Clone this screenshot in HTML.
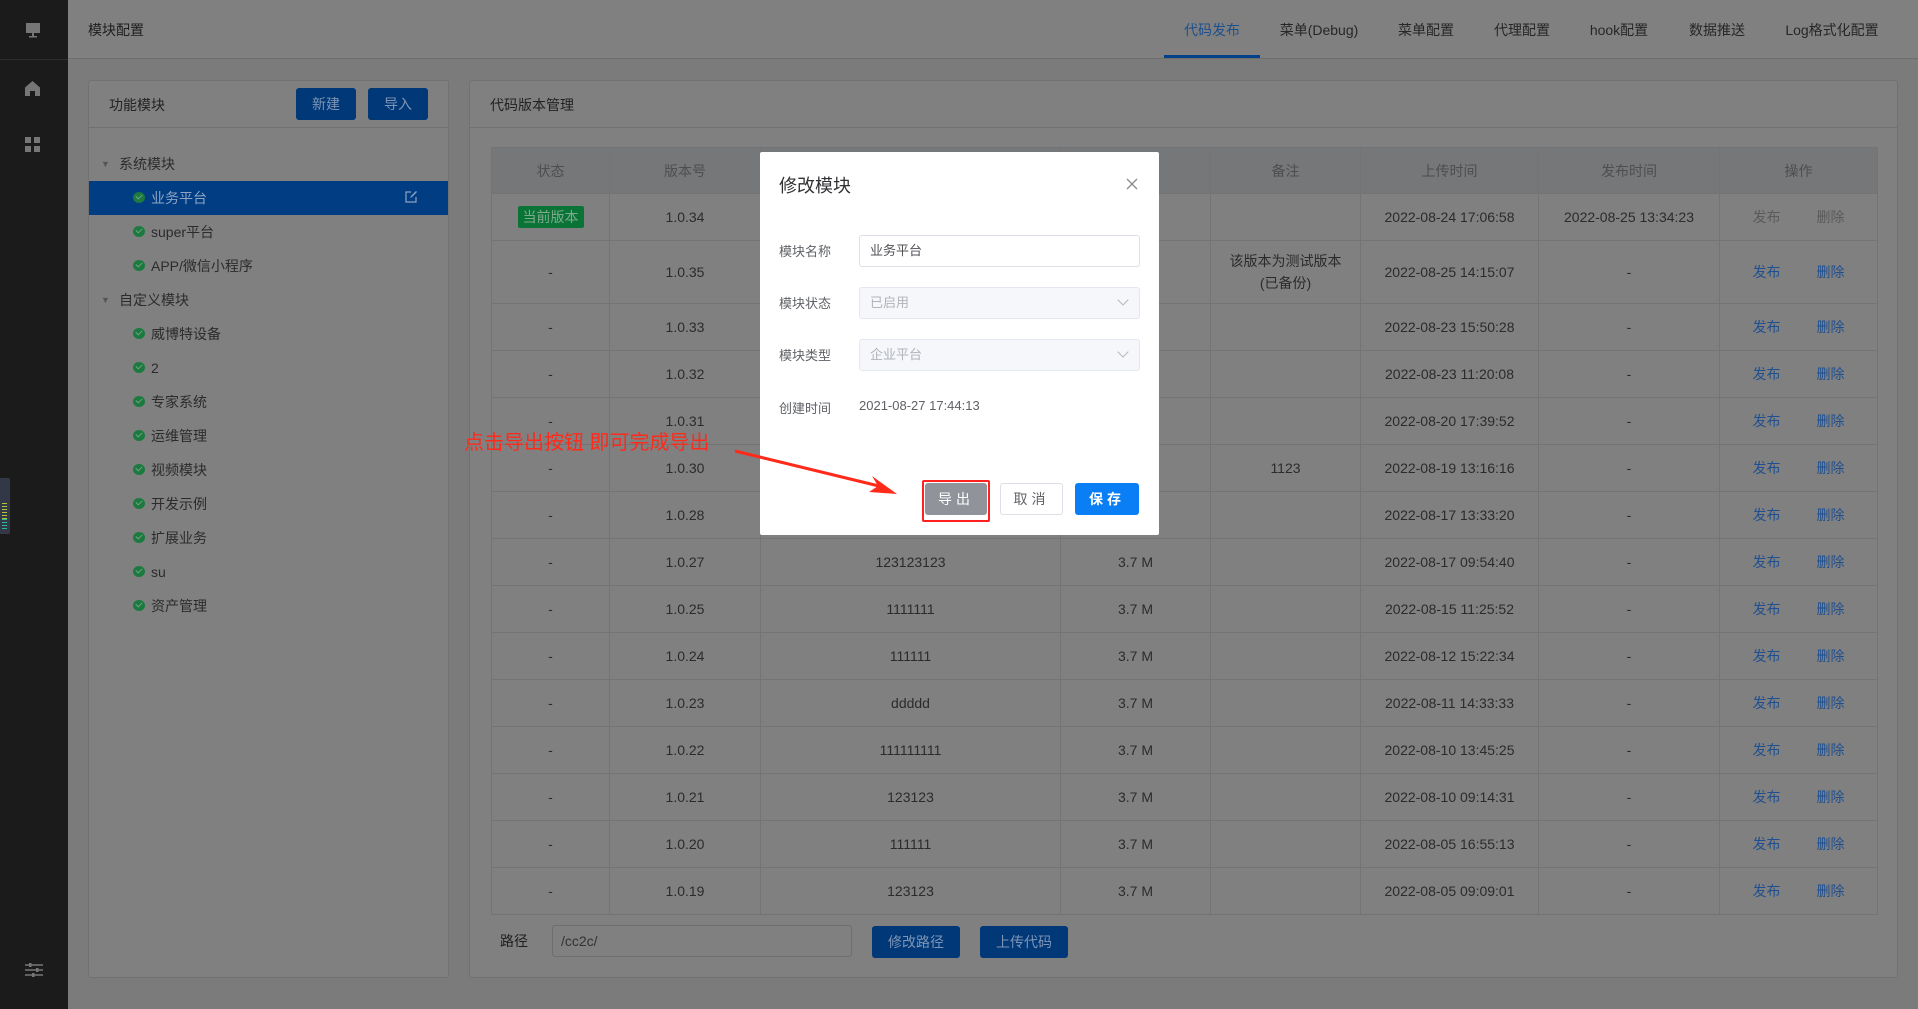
<!DOCTYPE html>
<html><head><meta charset="utf-8">
<style>
*{box-sizing:border-box;margin:0;padding:0}
body{width:1918px;height:1009px;overflow:hidden;background:#7b7b7c;font-family:"Liberation Sans","Noto Sans CJK SC",sans-serif;font-size:14px;color:#2b2b2b;position:relative}
.abs{position:absolute}
#side{left:0;top:0;width:68px;height:1009px;background:#1b1b1b}
#side .ln{position:absolute;left:0;top:59px;width:68px;height:1px;background:#2e2e2e}
#hdr{left:68px;top:0;width:1850px;height:59px;background:#808080;border-bottom:1px solid #6e6e6e}
.tab{position:absolute;top:20px;font-size:14px;color:#262626;transform:translateX(-50%);white-space:nowrap}
.panel{background:#808080;border:1px solid #717171;border-radius:3px}
.btn{position:absolute;background:#003878;color:#7f95b5;border-radius:3px;text-align:center;font-size:14px}
.tree{position:absolute;left:0;width:359px;height:34px;line-height:34px}
.chk{position:absolute;left:44px;top:11px;width:12px;height:11px;border-radius:50%;background:#1c7a3e}
.chk:after{content:"";position:absolute;left:3px;top:2px;width:5px;height:3px;border-left:1.5px solid #74a087;border-bottom:1.5px solid #74a087;transform:rotate(-45deg)}
table{border-collapse:collapse;position:absolute;left:491px;top:147px;width:1386px;table-layout:fixed}
td,th{border:1px solid #747474;text-align:center;font-weight:normal;font-size:14px;color:#2b2b2b}
th{background:#767778;color:#4e4e4e;height:46px}
td{height:47px}
a{color:#1f4f90;text-decoration:none;margin:0 18px}
.g{color:#5a5a5a}
#modal{left:760px;top:152px;width:399px;height:383px;background:#fff;border-radius:2px}
.lbl{position:absolute;left:19px;color:#5f6166;font-size:13px}
.inp{position:absolute;left:99px;width:281px;height:32px;border:1px solid #dcdfe6;border-radius:3px;padding-left:10px;line-height:30px;font-size:13px}
.dis{background:#f5f7fa;color:#b0b3b8;border-color:#e4e7ed}
.arr{position:absolute;right:12px;top:8px;width:8px;height:8px;border-right:1px solid #b4b6bb;border-bottom:1px solid #b4b6bb;transform:rotate(45deg)}
</style></head><body>
<div id="side" class="abs"><div class="ln"></div>
<svg class="abs" style="left:25px;top:22px" width="16" height="16" viewBox="0 0 16 16"><rect x="1" y="1" width="14" height="10" fill="#767676"/><rect x="7" y="11" width="2" height="3" fill="#767676"/><rect x="4" y="14" width="8" height="1.5" fill="#767676"/></svg>
<svg class="abs" style="left:25px;top:81px" width="15" height="15" viewBox="0 0 15 15"><path d="M7.5 0L0 6.5V15h5v-5h5v5h5V6.5z" fill="#767676"/></svg>
<svg class="abs" style="left:25px;top:137px" width="15" height="15" viewBox="0 0 15 15"><rect x="0" y="0" width="6" height="6" fill="#767676"/><rect x="9" y="0" width="6" height="6" fill="#767676"/><rect x="0" y="9" width="6" height="6" fill="#767676"/><rect x="9" y="9" width="6" height="6" fill="#767676"/></svg>
<svg class="abs" style="left:25px;top:963px" width="18" height="14" viewBox="0 0 18 14"><g stroke="#777" stroke-width="1.5"><line x1="0" y1="2" x2="18" y2="2"/><line x1="0" y1="7" x2="18" y2="7"/><line x1="0" y1="12" x2="18" y2="12"/></g><rect x="4" y="0" width="2.5" height="4" fill="#777"/><rect x="11" y="5" width="2.5" height="4" fill="#777"/><rect x="7" y="10" width="2.5" height="4" fill="#777"/></svg>
<div class="abs" style="left:0;top:478px;width:10px;height:56px;background:#333846;border-radius:0 2px 2px 0"></div>
<div class="abs" style="left:2px;top:503px;width:5px;height:16px;background:repeating-linear-gradient(#b5c23a 0 1px,transparent 1px 3px)"></div>
<div class="abs" style="left:2px;top:519px;width:5px;height:12px;background:repeating-linear-gradient(#2fb79a 0 1px,transparent 1px 3px)"></div>
</div>
<div id="hdr" class="abs">
<div class="abs" style="left:20px;top:20px;color:#1e1e1e">模块配置</div>
<div class="tab" style="left:1144px;color:#1d4f8c">代码发布</div>
<div class="tab" style="left:1251px">菜单(Debug)</div>
<div class="tab" style="left:1358px">菜单配置</div>
<div class="tab" style="left:1454px">代理配置</div>
<div class="tab" style="left:1551px">hook配置</div>
<div class="tab" style="left:1649px">数据推送</div>
<div class="tab" style="left:1764px">Log格式化配置</div>
<div class="abs" style="left:1096px;top:55px;width:96px;height:3px;background:#00418a"></div>
</div>

<div class="abs panel" style="left:88px;top:80px;width:361px;height:898px">
<div class="abs" style="left:0;top:46px;width:359px;height:1px;background:#717171"></div>
<div class="abs" style="left:20px;top:14px;color:#222">功能模块</div>
<div class="btn" style="left:207px;top:7px;width:60px;height:32px;line-height:32px">新建</div>
<div class="btn" style="left:279px;top:7px;width:60px;height:32px;line-height:32px">导入</div>
<div class="tree" style="top:66px"><span class="abs" style="left:12px;top:0;color:#555;font-size:9px">▼</span><span class="abs" style="left:30px">系统模块</span></div>
<div class="tree" style="top:100px;background:#003d82"><div class="chk"></div><span class="abs" style="left:62px;color:#8ea4c4">业务平台</span><svg class="abs" style="left:316px;top:10px" width="12" height="12" viewBox="0 0 12 12"><path d="M6 1H1v10h10V6" fill="none" stroke="#8ea4c4" stroke-width="1.2"/><path d="M5 7l1-2 5-5 1 1-5 5z" fill="#8ea4c4"/></svg></div>
<div class="tree" style="top:134px"><div class="chk"></div><span class="abs" style="left:62px">super平台</span></div>
<div class="tree" style="top:168px"><div class="chk"></div><span class="abs" style="left:62px">APP/微信小程序</span></div>
<div class="tree" style="top:202px"><span class="abs" style="left:12px;color:#555;font-size:9px">▼</span><span class="abs" style="left:30px">自定义模块</span></div>
<div class="tree" style="top:236px"><div class="chk"></div><span class="abs" style="left:62px">威博特设备</span></div>
<div class="tree" style="top:270px"><div class="chk"></div><span class="abs" style="left:62px">2</span></div>
<div class="tree" style="top:304px"><div class="chk"></div><span class="abs" style="left:62px">专家系统</span></div>
<div class="tree" style="top:338px"><div class="chk"></div><span class="abs" style="left:62px">运维管理</span></div>
<div class="tree" style="top:372px"><div class="chk"></div><span class="abs" style="left:62px">视频模块</span></div>
<div class="tree" style="top:406px"><div class="chk"></div><span class="abs" style="left:62px">开发示例</span></div>
<div class="tree" style="top:440px"><div class="chk"></div><span class="abs" style="left:62px">扩展业务</span></div>
<div class="tree" style="top:474px"><div class="chk"></div><span class="abs" style="left:62px">su</span></div>
<div class="tree" style="top:508px"><div class="chk"></div><span class="abs" style="left:62px">资产管理</span></div>
</div>

<div class="abs panel" style="left:469px;top:80px;width:1429px;height:898px">
<div class="abs" style="left:0;top:46px;width:1427px;height:1px;background:#717171"></div>
<div class="abs" style="left:20px;top:14px;color:#222">代码版本管理</div>
</div>

<table>
<colgroup><col style="width:118px"><col style="width:151px"><col style="width:300px"><col style="width:150px"><col style="width:150px"><col style="width:178px"><col style="width:181px"><col style="width:158px"></colgroup>
<tr><th>状态</th><th>版本号</th><th>描述</th><th>大小</th><th>备注</th><th>上传时间</th><th>发布时间</th><th>操作</th></tr>
<tr><td><span style="background:#0a7437;color:#7fa98c;padding:3px 5px;border-radius:2px">当前版本</span></td><td>1.0.34</td><td></td><td></td><td></td><td>2022-08-24 17:06:58</td><td>2022-08-25 13:34:23</td><td><a class="g">发布</a><a class="g">删除</a></td></tr>
<tr><td style="height:63px">-</td><td>1.0.35</td><td></td><td></td><td style="line-height:22px">该版本为测试版本<br>(已备份)</td><td>2022-08-25 14:15:07</td><td>-</td><td><a>发布</a><a>删除</a></td></tr>
<tr><td>-</td><td>1.0.33</td><td></td><td></td><td></td><td>2022-08-23 15:50:28</td><td>-</td><td><a>发布</a><a>删除</a></td></tr>
<tr><td>-</td><td>1.0.32</td><td></td><td></td><td></td><td>2022-08-23 11:20:08</td><td>-</td><td><a>发布</a><a>删除</a></td></tr>
<tr><td>-</td><td>1.0.31</td><td></td><td></td><td></td><td>2022-08-20 17:39:52</td><td>-</td><td><a>发布</a><a>删除</a></td></tr>
<tr><td>-</td><td>1.0.30</td><td></td><td></td><td>1123</td><td>2022-08-19 13:16:16</td><td>-</td><td><a>发布</a><a>删除</a></td></tr>
<tr><td>-</td><td>1.0.28</td><td></td><td></td><td></td><td>2022-08-17 13:33:20</td><td>-</td><td><a>发布</a><a>删除</a></td></tr>
<tr><td>-</td><td>1.0.27</td><td>123123123</td><td>3.7 M</td><td></td><td>2022-08-17 09:54:40</td><td>-</td><td><a>发布</a><a>删除</a></td></tr>
<tr><td>-</td><td>1.0.25</td><td>1111111</td><td>3.7 M</td><td></td><td>2022-08-15 11:25:52</td><td>-</td><td><a>发布</a><a>删除</a></td></tr>
<tr><td>-</td><td>1.0.24</td><td>111111</td><td>3.7 M</td><td></td><td>2022-08-12 15:22:34</td><td>-</td><td><a>发布</a><a>删除</a></td></tr>
<tr><td>-</td><td>1.0.23</td><td>ddddd</td><td>3.7 M</td><td></td><td>2022-08-11 14:33:33</td><td>-</td><td><a>发布</a><a>删除</a></td></tr>
<tr><td>-</td><td>1.0.22</td><td>111111111</td><td>3.7 M</td><td></td><td>2022-08-10 13:45:25</td><td>-</td><td><a>发布</a><a>删除</a></td></tr>
<tr><td>-</td><td>1.0.21</td><td>123123</td><td>3.7 M</td><td></td><td>2022-08-10 09:14:31</td><td>-</td><td><a>发布</a><a>删除</a></td></tr>
<tr><td>-</td><td>1.0.20</td><td>111111</td><td>3.7 M</td><td></td><td>2022-08-05 16:55:13</td><td>-</td><td><a>发布</a><a>删除</a></td></tr>
<tr><td>-</td><td>1.0.19</td><td>123123</td><td>3.7 M</td><td></td><td>2022-08-05 09:09:01</td><td>-</td><td><a>发布</a><a>删除</a></td></tr>
</table>

<div class="abs" style="left:500px;top:931px;color:#1e1e1e">路径</div>
<div class="abs" style="left:552px;top:925px;width:300px;height:32px;border:1px solid #6e6e6e;border-radius:3px;padding-left:8px;line-height:30px;color:#333">/cc2c/</div>
<div class="btn" style="left:872px;top:926px;width:88px;height:32px;line-height:32px">修改路径</div>
<div class="btn" style="left:980px;top:926px;width:88px;height:32px;line-height:32px">上传代码</div>

<div class="abs" style="left:464px;top:426px;color:#ff2a1a;font-size:20px;white-space:nowrap">点击导出按钮 即可完成导出</div>

<div id="modal" class="abs">
<div class="abs" style="left:19px;top:20px;font-size:18px;color:#303133">修改模块</div>
<svg class="abs" style="left:366px;top:26px" width="12" height="12" viewBox="0 0 12 12"><path d="M1 1L11 11M11 1L1 11" stroke="#8a8c91" stroke-width="1.3"/></svg>
<div class="lbl" style="top:89px">模块名称</div><div class="inp" style="top:83px;color:#505256">业务平台</div>
<div class="lbl" style="top:141px">模块状态</div><div class="inp dis" style="top:135px">已启用<div class="arr"></div></div>
<div class="lbl" style="top:193px">模块类型</div><div class="inp dis" style="top:187px">企业平台<div class="arr"></div></div>
<div class="lbl" style="top:246px">创建时间</div><div class="abs" style="left:99px;top:246px;font-size:13px;color:#5f6166">2021-08-27 17:44:13</div>
<div class="abs" style="left:162px;top:328px;width:68px;height:42px;border:2px solid #ff2020;border-radius:2px"></div>
<div class="abs" style="left:165px;top:331px;width:62px;height:32px;background:#909399;color:#fff;border-radius:3px;text-align:center;line-height:32px;font-size:14px;letter-spacing:4px">导出</div>
<div class="abs" style="left:240px;top:331px;width:63px;height:32px;border:1px solid #dcdfe6;color:#606266;border-radius:3px;text-align:center;line-height:30px;font-size:14px;letter-spacing:4px">取消</div>
<div class="abs" style="left:315px;top:331px;width:64px;height:32px;background:#0a7ff5;color:#fff;border-radius:3px;text-align:center;line-height:32px;font-size:14px;letter-spacing:4px;font-weight:bold">保存</div>
</div>

<svg class="abs" style="left:0;top:0" width="1918" height="1009"><path d="M735 451L883 487" stroke="#ff2a1a" stroke-width="3"/><polygon points="897,494 872,476 878,486 869,492" fill="#ff2a1a"/></svg>
</body></html>
